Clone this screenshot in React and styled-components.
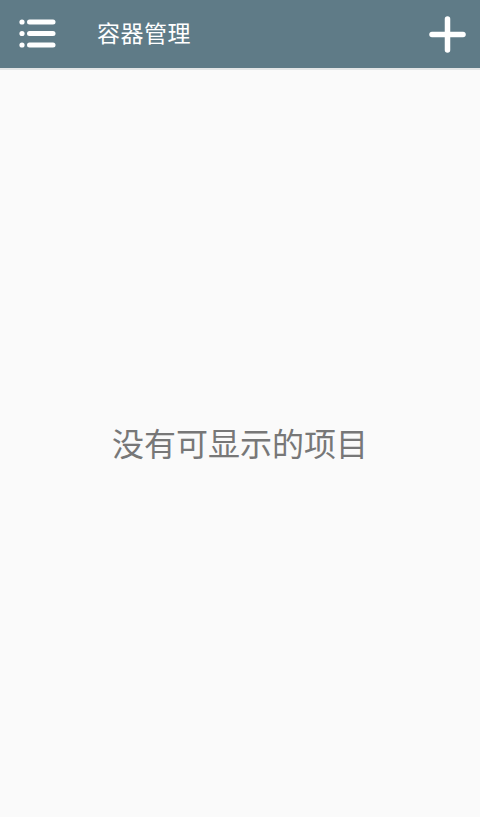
import React from 'react'
import styled, { createGlobalStyle } from 'styled-components'

const GlobalStyle = createGlobalStyle`
  html, body {
    margin:0;
    padding:0;
    background:#fafafa;
  }
  body {
    font-family:"Noto Sans CJK SC", "Noto Sans", sans-serif;
  }
`;

const Page = styled.div`
  width:480px;
  height:817px;
  display:flex;
  flex-direction:column;
  background:#fafafa;
`;
const Toolbar = styled.div`
  height:68px;
  flex-shrink:0;
  display:flex;
  align-items:center;
  background:#5f7b87;
  border-bottom:2px solid #e3e5e6;
  padding:0 14px 0 19px;
`;
const IconButton = styled.div`
  width:${p => p.w}px;
  height:${p => p.h}px;
  display:flex;
  align-items:center;
  justify-content:center;
`;
const Title = styled.div`
  flex:1;
  margin-left:41px;
  color:#fff;
  font-size:23px;
  line-height:1;
  letter-spacing:0.5px;
  margin-bottom:4px;
`;
const Body = styled.div`
  flex:1;
  display:flex;
  align-items:center;
  justify-content:center;
  padding-bottom:3px;
`;
const Empty = styled.div`
  color:#777;
  font-size:32px;
  line-height:1;
`;

const MenuIcon = () => (
  <svg width="37" height="30" viewBox="0 0 37 30">
    {[3, 14.5, 26].map(y => (
      <g key={y}>
        <circle cx="3" cy={y} r="2.6" fill="#fff" />
        <line x1="10.5" y1={y} x2="34" y2={y} stroke="#fff" strokeWidth="5" strokeLinecap="round" />
      </g>
    ))}
  </svg>
);

const PlusIcon = () => (
  <svg width="37" height="37" viewBox="0 0 37 37">
    <line x1="3" y1="18.5" x2="34" y2="18.5" stroke="#fff" strokeWidth="5.5" strokeLinecap="round" />
    <line x1="18.5" y1="3" x2="18.5" y2="34" stroke="#fff" strokeWidth="5.5" strokeLinecap="round" />
  </svg>
);

const App = () => {
  return (
    <Page>
      <GlobalStyle />
      <Toolbar>
        <IconButton w={37} h={30}><MenuIcon /></IconButton>
        <Title>容器管理</Title>
        <IconButton w={37} h={37}><PlusIcon /></IconButton>
      </Toolbar>
      <Body>
        <Empty>没有可显示的项目</Empty>
      </Body>
    </Page>
  )
}

export default App
